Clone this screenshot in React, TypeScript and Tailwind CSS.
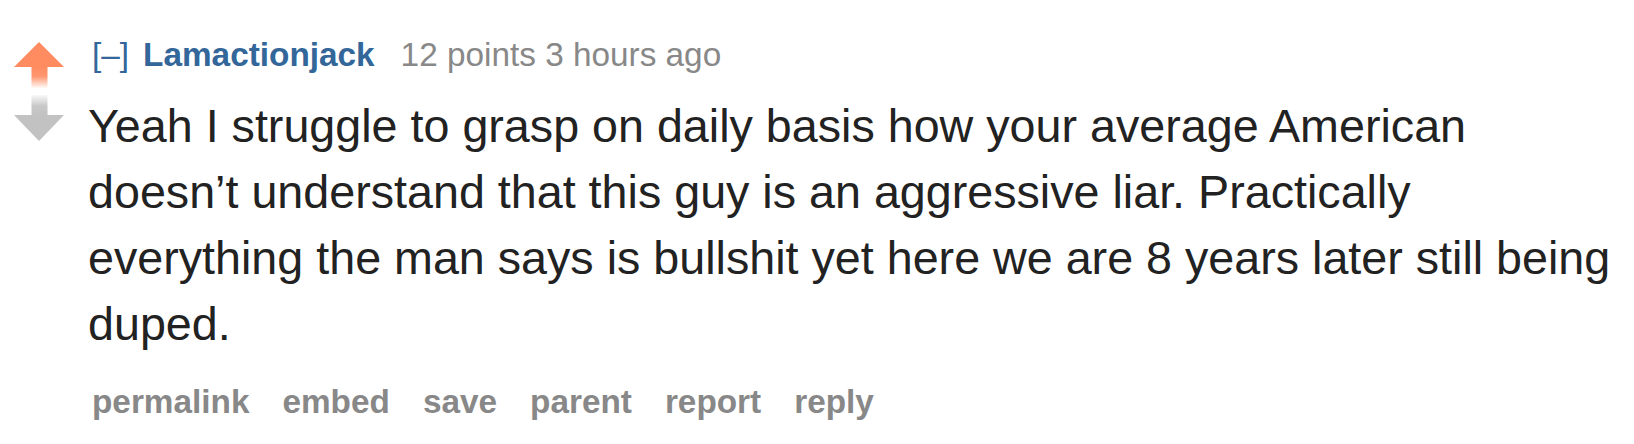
import React from 'react';

const font = { fontFamily: '"Liberation Sans", Arial, sans-serif' };

const VoteArrows: React.FC = () => (
  <svg width="50" height="100" viewBox="0 0 50 100" className="block">
    <defs>
      <linearGradient id="upStem" x1="0" y1="0" x2="0" y2="1">
        <stop offset="0" stopColor="#ff8b60" />
        <stop offset="0.45" stopColor="#ff8b60" stopOpacity="0.9" />
        <stop offset="1" stopColor="#ff8b60" stopOpacity="0.05" />
      </linearGradient>
      <linearGradient id="downStem" x1="0" y1="0" x2="0" y2="1">
        <stop offset="0" stopColor="#c2c2c2" stopOpacity="0.1" />
        <stop offset="0.55" stopColor="#c2c2c2" stopOpacity="0.9" />
        <stop offset="1" stopColor="#c2c2c2" />
      </linearGradient>
    </defs>
    {/* upvote */}
    <polygon points="25,0 50,25 0,25" fill="#ff8b60" />
    <rect x="17.5" y="25" width="16" height="21" fill="url(#upStem)" />
    {/* downvote */}
    <rect x="17.5" y="53" width="16" height="20" fill="url(#downStem)" />
    <polygon points="0,73 50,73 25,99" fill="#c2c2c2" />
  </svg>
);

const links = ['permalink', 'embed', 'save', 'parent', 'report', 'reply'];

export default function App() {
  return (
    <div className="w-[1634px] h-[444px] bg-white flex" style={font}>
      <div className="pl-[14px] pt-[42px] w-[88px] shrink-0">
        <VoteArrows />
      </div>

      <div className="flex-1 pr-[14px] pt-[35px]">
        <div className="flex items-baseline text-[33.33px] leading-[40px] pl-[4px]">
          <span className="text-[#336699]">[–]</span>
          <span className="ml-[14px] font-bold text-[#336699]">Lamactionjack</span>
          <span className="ml-[26px] text-[#888888]">12 points 3 hours ago</span>
        </div>

        <p className="mt-[18px] text-[46.67px] leading-[66px] text-[#222222]">
          Yeah I struggle to grasp on daily basis how your average American doesn’t understand that
          this guy is an aggressive liar. Practically everything the man says is bullshit yet here we
          are 8 years later still being duped.
        </p>

        <div className="mt-[25px] flex gap-[33px] pl-[4px] text-[33.33px] leading-[40px] font-bold text-[#888888]">
          {links.map(l => (
            <span key={l}>{l}</span>
          ))}
        </div>
      </div>
    </div>
  );
}
